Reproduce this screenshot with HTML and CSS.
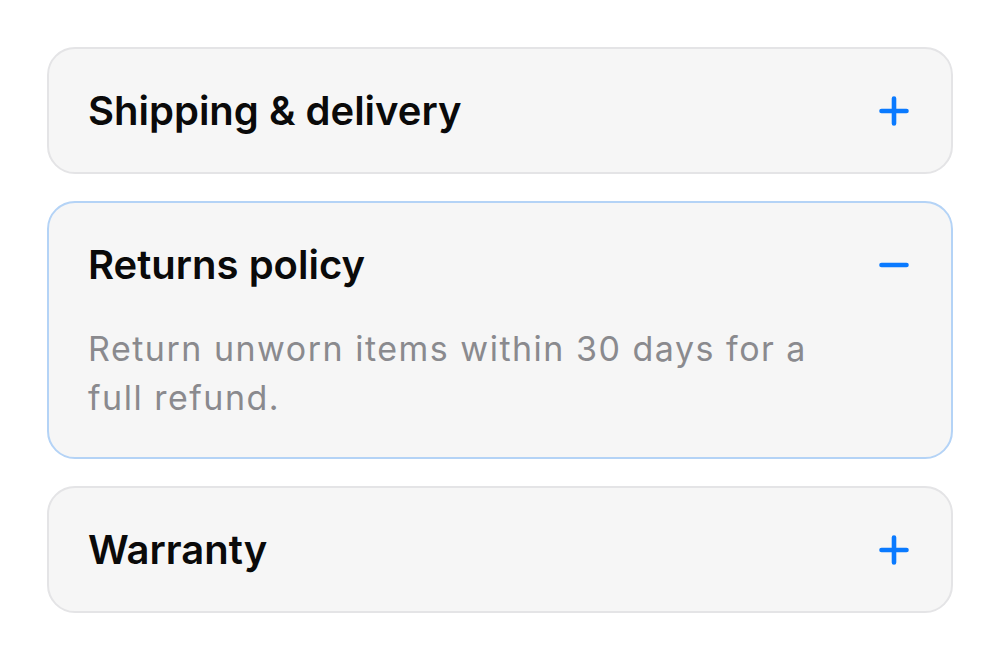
FILE: index.html
```html
<!DOCTYPE html>
<html>
<head>
<meta charset="utf-8">
<link rel="stylesheet" href="styles.css">
</head>
<body>
<div class="list">
  <div class="card">
    <div class="head">
      <span class="title">Shipping &amp; delivery</span>
      <svg class="icon" viewBox="0 0 30 30"><path d="M15 2.5v25M2.5 15h25" stroke="#0a7aff" stroke-width="4.6" stroke-linecap="round" fill="none"/></svg>
    </div>
  </div>
  <div class="card open">
    <div class="head">
      <span class="title">Returns policy</span>
      <svg class="icon" viewBox="0 0 30 30"><path d="M2.5 15h25" stroke="#0a7aff" stroke-width="4.6" stroke-linecap="round" fill="none"/></svg>
    </div>
    <div class="body">Return unworn items within 30 days for a<br>full refund.</div>
  </div>
  <div class="card">
    <div class="head">
      <span class="title">Warranty</span>
      <svg class="icon" viewBox="0 0 30 30"><path d="M15 2.5v25M2.5 15h25" stroke="#0a7aff" stroke-width="4.6" stroke-linecap="round" fill="none"/></svg>
    </div>
  </div>
</div>
</body>
</html>
```

FILE: styles.css
```css
html, body {
  margin: 0;
  background: #ffffff;
}
body {
  font-family: Inter, "Noto Sans", sans-serif;
}
.list {
  padding: 47px;
  display: flex;
  flex-direction: column;
  gap: 27px;
}
.card {
  background: #f6f6f6;
  border: 2px solid #e4e4e6;
  border-radius: 28px;
}
.card.open {
  border-color: #b4d3f6;
}
.head {
  height: 123px;
  padding: 0 42px 0 39px;
  display: flex;
  align-items: center;
  justify-content: space-between;
}
.title {
  font-size: 40px;
  font-weight: 600;
  color: #0a0a0a;
  letter-spacing: 0;
}
.icon {
  width: 30px;
  height: 30px;
}
.body {
  padding: 0 39px 35px;
  margin-top: -2px;
  font-size: 34px;
  line-height: 49px;
  letter-spacing: 1.5px;
  color: #8a8a8e;
}
```
